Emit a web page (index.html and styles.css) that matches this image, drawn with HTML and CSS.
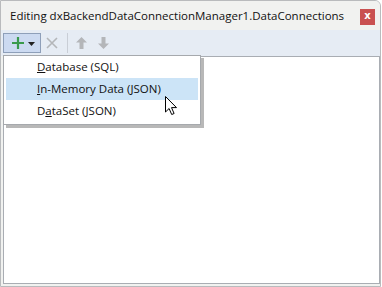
FILE: index.html
```html
<!DOCTYPE html>
<html>
<head>
<meta charset="utf-8">
<link rel="stylesheet" href="styles.css">
</head>
<body>
<div class="window">
  <div class="titlebar">
    <span class="title">Editing dxBackendDataConnectionManager1.DataConnections</span>
    <span class="close">x</span>
  </div>
  <div class="toolbar">
    <div class="tbtn add">
      <svg width="14" height="14" viewBox="0 0 14 14"><path d="M7 1v12M1 7h12" stroke="#3a9a4c" stroke-width="2.2" fill="none"/></svg>
      <svg width="7" height="4" viewBox="0 0 7 4" class="caret"><path d="M0 0h7L3.5 4z" fill="#222"/></svg>
    </div>
    <div class="tbtn icon">
      <svg width="12" height="12" viewBox="0 0 12 12"><path d="M1 1l10 10M11 1L1 11" stroke="#b4b6b9" stroke-width="1.6" fill="none"/></svg>
    </div>
    <div class="sep"></div>
    <div class="tbtn icon">
      <svg width="13" height="14" viewBox="0 0 13 14"><path d="M6.5 1L1 6.5h3.5V13h4V6.5H12z" fill="#b4b6b9"/></svg>
    </div>
    <div class="tbtn icon">
      <svg width="13" height="14" viewBox="0 0 13 14"><path d="M6.5 13L1 7.5h3.5V1h4v6.5H12z" fill="#b4b6b9"/></svg>
    </div>
  </div>
  <div class="content"></div>

  <div class="menu">
    <div class="item"><span class="u">D</span>atabase (SQL)</div>
    <div class="item active"><span class="u">I</span>n-Memory Data (JSON)</div>
    <div class="item">D<span class="u">a</span>taSet (JSON)</div>
  </div>

  <svg class="cursor" width="13" height="20" viewBox="0 0 13 20">
    <path d="M0.5 0.5v15.5l3.6-3.5 2.6 6 2.4-1-2.6-5.9h5z" fill="#fff" stroke="#000" stroke-width="1" stroke-linejoin="round"/>
  </svg>
</div>
</body>
</html>
```

FILE: styles.css
```css
* { box-sizing: border-box; }
html, body { margin: 0; padding: 0; background: #fff; }
body {
  font-family: "Open Sans", "Noto Sans", sans-serif;
  font-size: 11px;
  color: #1a1a1a;
}
.window {
  position: relative;
  width: 381px;
  height: 287px;
  border: 1px solid #b9bbbd;
  border-top-right-radius: 6px;
  background: #f1f2f0;
  display: flex;
  flex-direction: column;
  overflow: hidden;
}
.titlebar {
  height: 29px;
  flex: none;
  display: flex;
  align-items: center;
  justify-content: space-between;
  padding: 0 5px 0 9px;
  background: #f1f2f0;
}
.title {
  font-size: 11.5px;
  color: #111;
  white-space: nowrap;
}
.close {
  width: 15px;
  height: 16px;
  margin-top: 2px;
  background: #c95151;
  color: #fff;
  font-weight: bold;
  font-size: 10px;
  line-height: 14px;
  text-align: center;
  font-family: "DejaVu Sans", sans-serif;
}
.toolbar {
  height: 26px;
  flex: none;
  background: #e6ecf4;
  display: flex;
  align-items: center;
  padding: 0 0 0 2px;
}
.tbtn {
  height: 20px;
  display: flex;
  align-items: center;
  justify-content: center;
}
.tbtn.add {
  width: 38px;
  background: #ccdaf1;
  border: 1px solid #8e9fb9;
  gap: 3px;
  padding-left: 2px;
}
.tbtn.add .caret { margin-top: 1px; }
.tbtn.icon { width: 22px; margin-left: 0; }
.sep {
  width: 1px;
  height: 20px;
  background: #c9ced6;
  margin: 0 2px 0 4px;
}
.content {
  flex: 1;
  background: #fff;
  border: 1px solid #a9adb3;
  margin: 0 0 2px 2px;
}
.menu {
  position: absolute;
  left: 2px;
  top: 54px;
  width: 198px;
  padding: 0 2px 2px;
  background: #fff;
  border: 1px solid #a6a9ad;
  box-shadow: 3px 3px 0 rgba(0,0,0,0.28);
}
.item {
  height: 22px;
  line-height: 22px;
  padding-left: 31px;
  font-size: 11.5px;
  color: #111;
  white-space: nowrap;
}
.item.active { background: #cce4f7; }
.u { text-decoration: underline; }
.cursor {
  position: absolute;
  left: 164px;
  top: 95px;
}
```
